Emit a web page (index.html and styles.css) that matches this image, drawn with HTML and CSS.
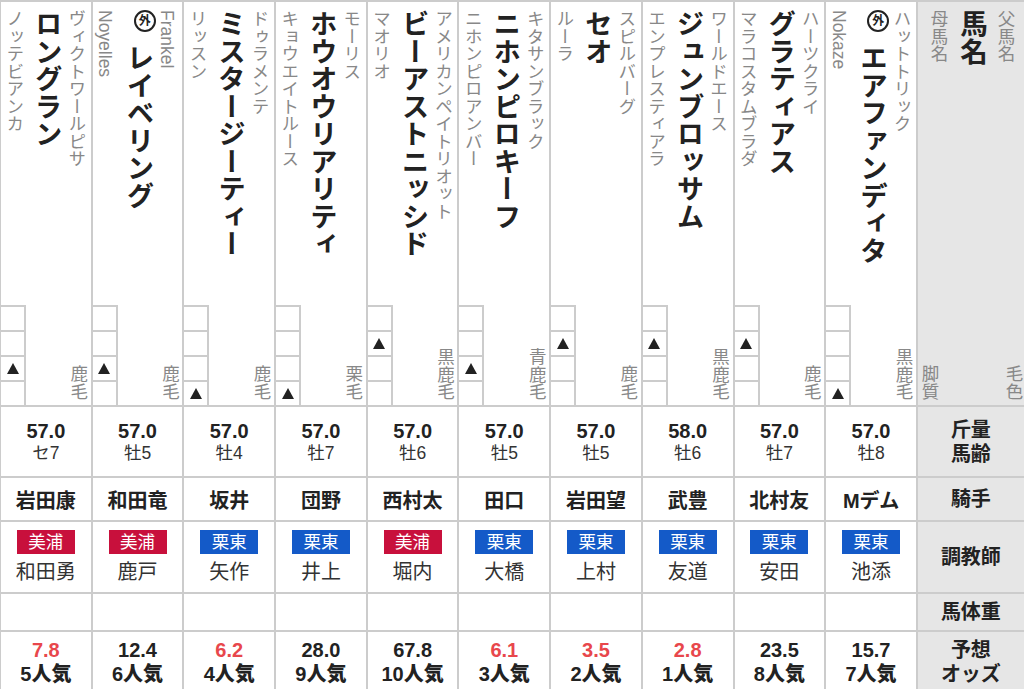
FILE: index.html
```html
<!DOCTYPE html>
<html lang="ja">
<head>
  <meta charset="UTF-8">
  <meta name="viewport" content="width=device-width, initial-scale=1.0">
  <title>出馬表</title>
  <link rel="stylesheet" href="styles.css">
</head>
<body>
  <div class="board">

    <!-- 1 ロングラン -->
    <div class="cell name-cell">
      <div class="names">
        <div class="sire">ヴィクトワールピサ</div>
        <div class="horse">ロングラン</div>
        <div class="dam">ノッテビアンカ</div>
      </div>
      <div class="cell-foot">
        <div class="style-boxes"><span></span><span></span><span class="on"></span><span></span></div>
        <div class="coat">鹿毛</div>
      </div>
    </div>
    <div class="cell weight"><b>57.0</b><span>セ7</span></div>
    <div class="cell jockey">岩田康</div>
    <div class="cell trainer"><span class="area miho">美浦</span><span>和田勇</span></div>
    <div class="cell"></div>
    <div class="cell odds"><span class="hot">7.8</span><b>5人気</b></div>

    <!-- 2 レイベリング -->
    <div class="cell name-cell">
      <div class="names">
        <div class="sire">Frankel</div>
        <div class="horse"><span class="foreign">外</span>レイベリング</div>
        <div class="dam">Noyelles</div>
      </div>
      <div class="cell-foot">
        <div class="style-boxes"><span></span><span></span><span class="on"></span><span></span></div>
        <div class="coat">鹿毛</div>
      </div>
    </div>
    <div class="cell weight"><b>57.0</b><span>牡5</span></div>
    <div class="cell jockey">和田竜</div>
    <div class="cell trainer"><span class="area miho">美浦</span><span>鹿戸</span></div>
    <div class="cell"></div>
    <div class="cell odds"><span>12.4</span><b>6人気</b></div>

    <!-- 3 ミスタージーティー -->
    <div class="cell name-cell">
      <div class="names">
        <div class="sire">ドゥラメンテ</div>
        <div class="horse">ミスタージーティー</div>
        <div class="dam">リッスン</div>
      </div>
      <div class="cell-foot">
        <div class="style-boxes"><span></span><span></span><span></span><span class="on"></span></div>
        <div class="coat">鹿毛</div>
      </div>
    </div>
    <div class="cell weight"><b>57.0</b><span>牡4</span></div>
    <div class="cell jockey">坂井</div>
    <div class="cell trainer"><span class="area ritto">栗東</span><span>矢作</span></div>
    <div class="cell"></div>
    <div class="cell odds"><span class="hot">6.2</span><b>4人気</b></div>

    <!-- 4 ホウオウリアリティ -->
    <div class="cell name-cell">
      <div class="names">
        <div class="sire">モーリス</div>
        <div class="horse">ホウオウリアリティ</div>
        <div class="dam">キョウエイトルース</div>
      </div>
      <div class="cell-foot">
        <div class="style-boxes"><span></span><span></span><span></span><span class="on"></span></div>
        <div class="coat">栗毛</div>
      </div>
    </div>
    <div class="cell weight"><b>57.0</b><span>牡7</span></div>
    <div class="cell jockey">団野</div>
    <div class="cell trainer"><span class="area ritto">栗東</span><span>井上</span></div>
    <div class="cell"></div>
    <div class="cell odds"><span>28.0</span><b>9人気</b></div>

    <!-- 5 ビーアストニッシド -->
    <div class="cell name-cell">
      <div class="names">
        <div class="sire">アメリカンペイトリオット</div>
        <div class="horse">ビーアストニッシド</div>
        <div class="dam">マオリオ</div>
      </div>
      <div class="cell-foot">
        <div class="style-boxes"><span></span><span class="on"></span><span></span><span></span></div>
        <div class="coat">黒鹿毛</div>
      </div>
    </div>
    <div class="cell weight"><b>57.0</b><span>牡6</span></div>
    <div class="cell jockey">西村太</div>
    <div class="cell trainer"><span class="area miho">美浦</span><span>堀内</span></div>
    <div class="cell"></div>
    <div class="cell odds"><span>67.8</span><b>10人気</b></div>

    <!-- 6 ニホンピロキーフ -->
    <div class="cell name-cell">
      <div class="names">
        <div class="sire">キタサンブラック</div>
        <div class="horse">ニホンピロキーフ</div>
        <div class="dam">ニホンピロアンバー</div>
      </div>
      <div class="cell-foot">
        <div class="style-boxes"><span></span><span></span><span class="on"></span><span></span></div>
        <div class="coat">青鹿毛</div>
      </div>
    </div>
    <div class="cell weight"><b>57.0</b><span>牡5</span></div>
    <div class="cell jockey">田口</div>
    <div class="cell trainer"><span class="area ritto">栗東</span><span>大橋</span></div>
    <div class="cell"></div>
    <div class="cell odds"><span class="hot">6.1</span><b>3人気</b></div>

    <!-- 7 セオ -->
    <div class="cell name-cell">
      <div class="names">
        <div class="sire">スピルバーグ</div>
        <div class="horse">セオ</div>
        <div class="dam">ルーラ</div>
      </div>
      <div class="cell-foot">
        <div class="style-boxes"><span></span><span class="on"></span><span></span><span></span></div>
        <div class="coat">鹿毛</div>
      </div>
    </div>
    <div class="cell weight"><b>57.0</b><span>牡5</span></div>
    <div class="cell jockey">岩田望</div>
    <div class="cell trainer"><span class="area ritto">栗東</span><span>上村</span></div>
    <div class="cell"></div>
    <div class="cell odds"><span class="hot">3.5</span><b>2人気</b></div>

    <!-- 8 ジュンブロッサム -->
    <div class="cell name-cell">
      <div class="names">
        <div class="sire">ワールドエース</div>
        <div class="horse">ジュンブロッサム</div>
        <div class="dam">エンプレスティアラ</div>
      </div>
      <div class="cell-foot">
        <div class="style-boxes"><span></span><span class="on"></span><span></span><span></span></div>
        <div class="coat">黒鹿毛</div>
      </div>
    </div>
    <div class="cell weight"><b>58.0</b><span>牡6</span></div>
    <div class="cell jockey">武豊</div>
    <div class="cell trainer"><span class="area ritto">栗東</span><span>友道</span></div>
    <div class="cell"></div>
    <div class="cell odds"><span class="hot">2.8</span><b>1人気</b></div>

    <!-- 9 グラティアス -->
    <div class="cell name-cell">
      <div class="names">
        <div class="sire">ハーツクライ</div>
        <div class="horse">グラティアス</div>
        <div class="dam">マラコスタムブラダ</div>
      </div>
      <div class="cell-foot">
        <div class="style-boxes"><span></span><span class="on"></span><span></span><span></span></div>
        <div class="coat">鹿毛</div>
      </div>
    </div>
    <div class="cell weight"><b>57.0</b><span>牡7</span></div>
    <div class="cell jockey">北村友</div>
    <div class="cell trainer"><span class="area ritto">栗東</span><span>安田</span></div>
    <div class="cell"></div>
    <div class="cell odds"><span>23.5</span><b>8人気</b></div>

    <!-- 10 エアファンディタ -->
    <div class="cell name-cell">
      <div class="names">
        <div class="sire">ハットトリック</div>
        <div class="horse"><span class="foreign">外</span>エアファンディタ</div>
        <div class="dam">Nokaze</div>
      </div>
      <div class="cell-foot">
        <div class="style-boxes"><span></span><span></span><span></span><span class="on"></span></div>
        <div class="coat">黒鹿毛</div>
      </div>
    </div>
    <div class="cell weight"><b>57.0</b><span>牡8</span></div>
    <div class="cell jockey">Mデム</div>
    <div class="cell trainer"><span class="area ritto">栗東</span><span>池添</span></div>
    <div class="cell"></div>
    <div class="cell odds"><span>15.7</span><b>7人気</b></div>

    <!-- header column -->
    <div class="cell head name-cell">
      <div class="names">
        <div class="sire">父馬名</div>
        <div class="horse">馬名</div>
        <div class="dam">母馬名</div>
      </div>
      <div class="cell-foot head-foot">
        <div class="coat">脚質</div>
        <div class="coat">毛色</div>
      </div>
    </div>
    <div class="cell head label">斤量<br>馬齢</div>
    <div class="cell head label">騎手</div>
    <div class="cell head label">調教師</div>
    <div class="cell head label">馬体重</div>
    <div class="cell head label">予想<br>オッズ</div>

  </div>
</body>
</html>
```

FILE: styles.css
```css
* { margin: 0; padding: 0; box-sizing: border-box; }
body { font-family: "Liberation Sans", "Noto Sans CJK JP", sans-serif; color: #222; background: #fff; }

/* grid: 10 horses + header column, filled column by column */
.board { display: grid; width: 1024px; grid-template-columns: repeat(10, 89.7px) 106px; grid-template-rows: 403px 69px 42px 70px 36px 62px; grid-auto-flow: column; gap: 2px; padding: 2px 0 0 1px; background: #ccc; }
.cell { background: #fff; }
.cell.head { background: #e6e6e6; }

/* names (vertical) */
.name-cell { display: flex; flex-direction: column; }
.names { flex: 1; display: flex; flex-direction: row-reverse; padding: 8px 4px 0 0; }
.names > div { flex: none; writing-mode: vertical-rl; white-space: nowrap; }
.sire, .dam { font-size: 17.5px; color: #888; }
.sire { width: 22px; line-height: 22px; }
.horse { width: 38px; line-height: 38px; font-size: 27.5px; font-weight: bold; color: #222; }
.dam { width: 26px; line-height: 26px; }
.head .names { padding-right: 6px; }
.head .sire { width: 26px; line-height: 26px; }
.head .horse { width: 42px; line-height: 42px; }
.head .dam { width: 24px; line-height: 24px; }

.foreign { display: inline-block; writing-mode: horizontal-tb; width: 22px; height: 22px; margin-bottom: 12px; border: 2px solid #222; border-radius: 50%; font-size: 12px; line-height: 18px; text-align: center; font-weight: bold; vertical-align: middle; }

/* running style boxes + coat colour */
.cell-foot { height: 100px; display: flex; justify-content: space-between; align-items: flex-end; }
.style-boxes { width: 25px; align-self: stretch; display: flex; flex-direction: column; }
.style-boxes span { height: 25px; border-top: 2px solid #ccc; border-right: 2px solid #ccc; display: flex; align-items: center; justify-content: center; }
.style-boxes .on::before { content: ""; border-left: 6.5px solid transparent; border-right: 6.5px solid transparent; border-bottom: 11px solid #222; }
.coat { writing-mode: vertical-rl; font-size: 17.5px; line-height: 22px; color: #888; padding: 0 2px 5px 0; }
.head-foot .coat { padding: 0 0 5px 0; }

/* lower rows */
.weight, .trainer, .odds { display: flex; flex-direction: column; align-items: center; justify-content: center; }
.weight b { font-size: 20px; line-height: 24px; }
.weight span { font-size: 17.5px; line-height: 21px; color: #333; }
.jockey { display: flex; align-items: center; justify-content: center; font-size: 20px; font-weight: bold; }
.trainer { font-size: 20px; line-height: 24px; color: #333; }
.area { width: 58px; height: 24px; margin-bottom: 6px; color: #fff; font-size: 17.5px; line-height: 24px; text-align: center; }
.miho { background: #c8103c; }
.ritto { background: #145ac8; }
.odds { justify-content: flex-start; padding-top: 6px; font-size: 20px; line-height: 24px; font-weight: bold; }
.odds .hot { color: #e8474c; }
.label { display: flex; align-items: center; justify-content: center; text-align: center; font-size: 20px; line-height: 24px; font-weight: bold; }
.label:last-child { align-items: flex-start; padding-top: 6px; }
```
